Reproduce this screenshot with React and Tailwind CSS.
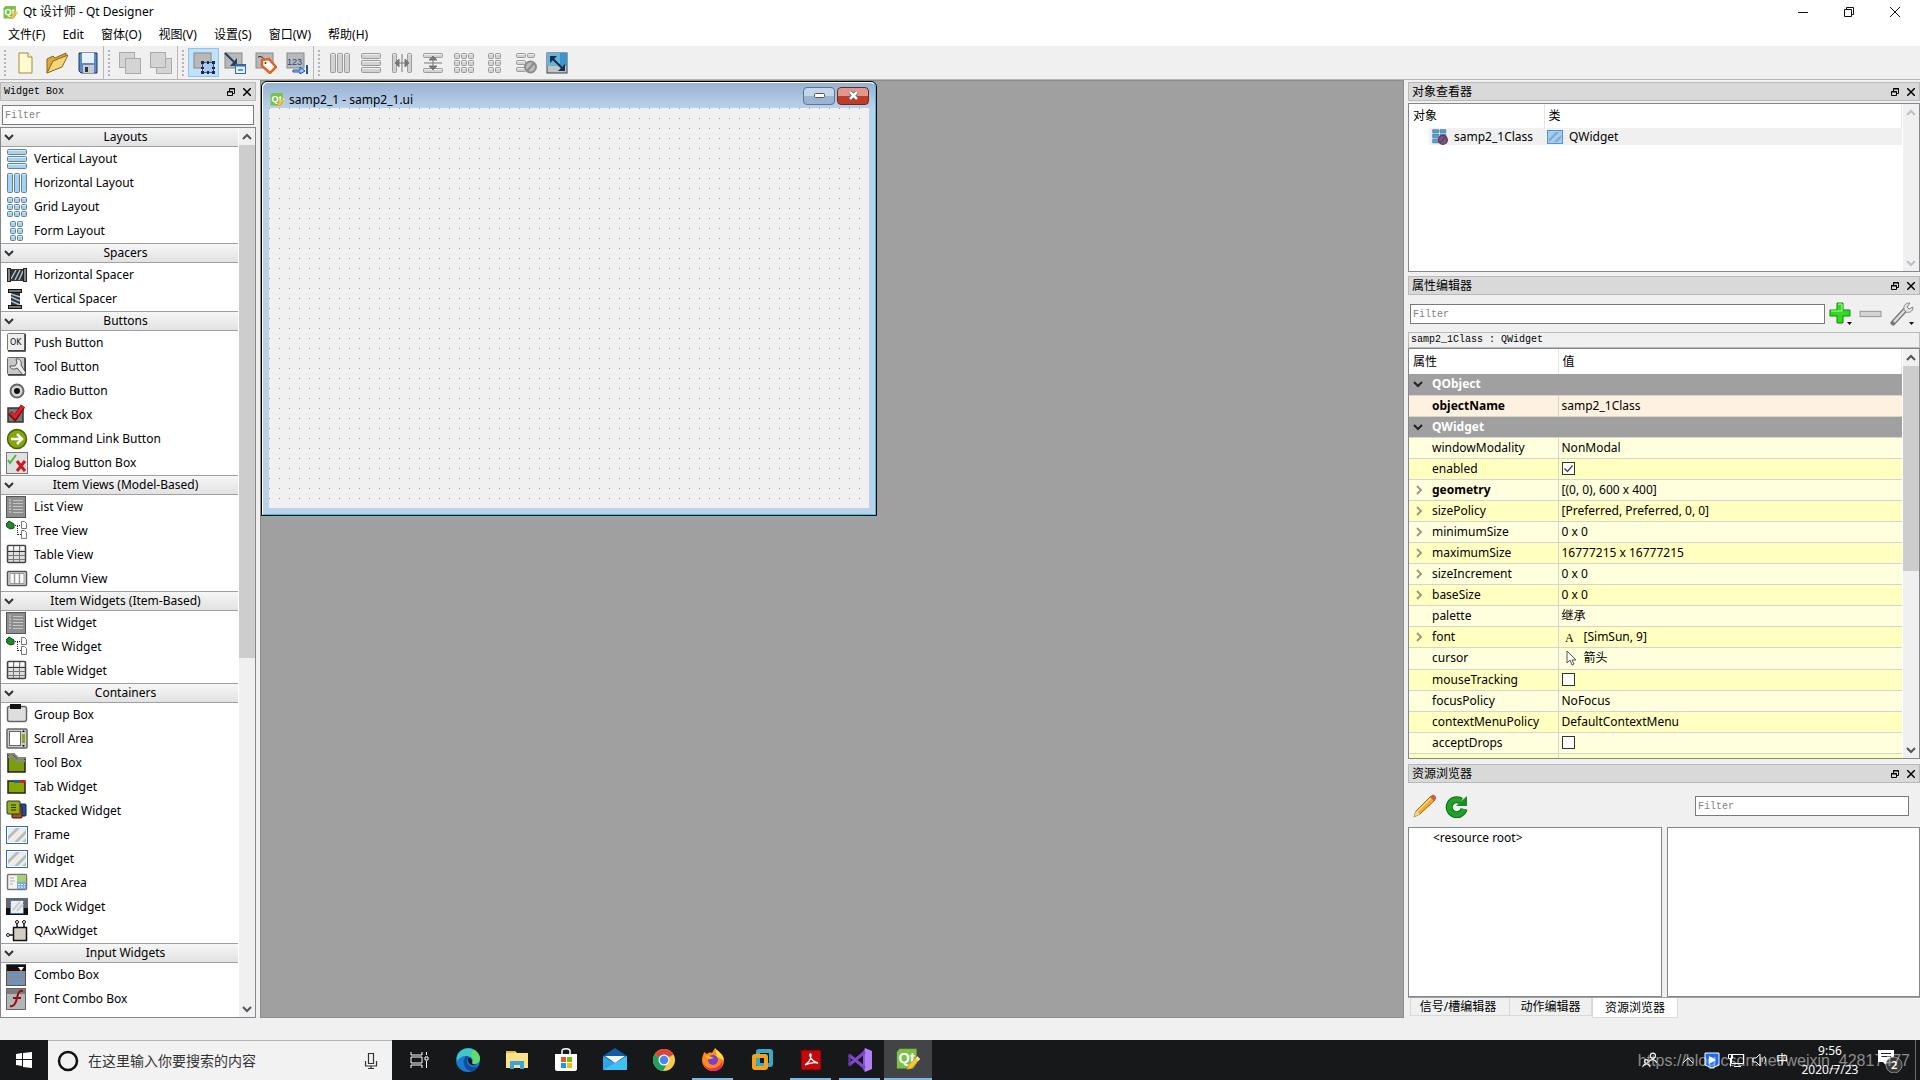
import clsx from "clsx";

const UI = "font-['Noto_Sans','Noto_Sans_CJK_SC',sans-serif]";
const SONG = "font-['Liberation_Mono','Noto_Sans_CJK_SC',monospace]";

/* ---------- shared svg bits ---------- */

function Svg({ w = 22, h = w, box = "0 0 22 22", className, children }) {
  return (
    <svg width={w} height={h} viewBox={box} className={clsx("block shrink-0", className)} fill="none" aria-hidden="true">
      {children}
    </svg>
  );
}

// rounded cells used by all the layout icons, as [x, y, w, h]
function Cells({ cells, gray }) {
  return cells.map(([x, y, w, h], i) => (
    <g key={i}>
      <rect x={x} y={y} width={w} height={h} rx="1"
        fill={gray ? "#d2d2d2" : "#a3d2f2"} stroke={gray ? "#9b9b9b" : "#68809c"} />
      <path d={`M${x + 1} ${y + 1}h${w - 2}`} stroke={gray ? "#efefef" : "#d8effc"} />
    </g>
  ));
}

const ROWS = [[1.5, 1.5, 19, 5], [1.5, 8.5, 19, 5], [1.5, 15.5, 19, 5]];
const COLS = [[1.5, 1.5, 5, 19], [8.5, 1.5, 5, 19], [15.5, 1.5, 5, 19]];
const GRID = [1.5, 8.5, 15.5].flatMap((y) => [1.5, 8.5, 15.5].map((x) => [x, y, 5, 5]));
const FORM = [1.5, 8.5, 15.5].flatMap((y) => [4.5, 11.5].map((x) => [x, y, 5, 5]));

function QtLogo({ size = 14 }) {
  return (
    <Svg w={size} box="0 0 28 28">
      <path d="M4 2h20v17l-4 6H1V6z" fill="#7bc143" />
      <text x="3" y="19" fontSize="17" fontWeight="700" fill="#fff" fontFamily="Liberation Sans">Qt</text>
      <path d="M25 11l3 3-10 11-5 1 2-5z" fill="#f6c535" stroke="#d88b2a" strokeWidth=".7" />
      <path d="M25 11l3 3-2 2-3-3z" fill="#f3dcd8" />
    </Svg>
  );
}

function Chevron({ dir = "down", color = "#444" }) {
  const d = { down: "M1 3l4 4 4-4", up: "M1 7l4-4 4 4", right: "M3 1l4 4-4 4" }[dir];
  return <Svg w={10} box="0 0 10 10"><path d={d} stroke={color} strokeWidth="2" /></Svg>;
}

/* ---------- widget box icons ---------- */

const listIcon = (
  <>
    <rect x=".5" y=".5" width="19" height="21" fill="#8e8e8e" stroke="#555" />
    <path d="M3 4h2M3 7h2M3 10h2M3 13h2M3 16h2" stroke="#ddd" />
    <path d="M7 4.500h10M7 7.500h10M7 10.500h10M7 13.500h10M7 16.500h10" stroke="#c4c4c4" />
  </>
);
const treeIcon = (
  <>
    <path d="M0 4l3-3 5 3v4l-4 1-3-2z" fill="#1f8a2c" stroke="#0d4d17" />
    <path d="M9 5.500h5M11.500 6v9M12 14.500h3" stroke="#222" strokeDasharray="1 1" />
    <path d="M15.500 1.500h3l2 2v5h-5zM15.500 10.500h3l2 2v6h-5z" fill="#fff" stroke="#777" />
  </>
);
const tableIcon = (
  <>
    <rect x="1.500" y="1.500" width="18" height="17" rx="1" fill="#dedede" stroke="#444" strokeWidth="1.500" />
    <path d="M3 4h4M9 4h4M15 4h3" stroke="#fff" strokeWidth="3" />
    <path d="M2 11.500h17M2 15.500h17M7.500 2v16M13.500 2v16" stroke="#777" />
    <path d="M2 7.500h17" stroke="#333" />
  </>
);
const stripes = (
  <>
    <rect x=".5" y="2.500" width="21" height="17" fill="#fff" stroke="#2c6cb8" />
    <rect x="2" y="4" width="18" height="14" fill="#ececea" />
    <path d="M2 12l8-8h4L2 16zM8 18L20 6v4l-8 8zM16 18l4-4v4z" fill="#bcbcbb" />
  </>
);

const ICONS = {
  vlayout: <Cells cells={ROWS} />,
  hlayout: <Cells cells={COLS} />,
  grid: <Cells cells={GRID} />,
  form: <Cells cells={FORM} />,
  hspacer: (
    <>
      <rect x="4" y="5" width="14" height="12" fill="#333" />
      <path d="M5 15l5-9M9 16l5-10M13 16l4-9" stroke="#a9c4d6" strokeWidth="1.500" />
      <rect x="1.500" y="4.500" width="3" height="13" fill="#888" stroke="#222" />
      <rect x="17.500" y="4.500" width="3" height="13" fill="#888" stroke="#222" />
    </>
  ),
  vspacer: (
    <>
      <path d="M5 4h9v14H5z" fill="#333" />
      <path d="M5 6l9 3M5 9l9 4M5 13l9 4" stroke="#a9c4d6" strokeWidth="1.500" />
      <rect x="2.500" y="1.500" width="13" height="3" fill="#777" stroke="#111" />
      <rect x="2.500" y="17.500" width="13" height="3" fill="#777" stroke="#111" />
    </>
  ),
  push: (
    <>
      <rect x="1.500" y="1.500" width="18" height="17" rx="1" fill="#eee" stroke="#777" />
      <path d="M19 2v17H2" stroke="#333" strokeWidth="1.500" />
      <text x="4" y="12.500" fontSize="8" fill="#111" fontFamily="DejaVu Sans">OK</text>
    </>
  ),
  tool: (
    <>
      <rect x="1.500" y="1.500" width="18" height="17" rx="1" fill="#c8c8c8" stroke="#666" />
      <path d="M19 2v17H2" stroke="#333" strokeWidth="1.500" />
      <path d="M10 3c4-1 6 3 5 6l5 8-3 2-6-7c-3 2-7 1-7-2l5 0 2-3z" fill="#ececec" stroke="#555" />
    </>
  ),
  radio: (
    <>
      <circle cx="11" cy="11" r="6.500" fill="#d8d8d8" stroke="#666" strokeWidth="2" />
      <circle cx="11" cy="11" r="3" fill="#111" />
    </>
  ),
  check: (
    <>
      <rect x="2" y="4" width="15" height="14" fill="#777" stroke="#333" strokeWidth="1.500" />
      <path d="M4 9l5 5 8-12" stroke="#7a0b10" strokeWidth="5" /><path d="M5 9l4 4 8-11" stroke="#e02128" strokeWidth="3" />
    </>
  ),
  command: (
    <>
      <circle cx="11" cy="11" r="9.500" fill="#82a60c" stroke="#4b6007" strokeWidth="1.500" />
      <path d="M5 11h10M11 6l5 5-5 5" stroke="#fff" strokeWidth="2.500" />
    </>
  ),
  dialog: (
    <>
      <rect x=".5" y=".5" width="21" height="21" fill="#e0e0e0" stroke="#777" />
      <path d="M2 8l2 3 6-8" stroke="#4cb848" strokeWidth="2" /><path d="M11 9l8 10M19 9l-8 10" stroke="#c91c22" strokeWidth="3" />
    </>
  ),
  list: listIcon,
  tree: treeIcon,
  table: tableIcon,
  column: (
    <>
      <rect x="1.500" y="3.500" width="19" height="14" rx="1" fill="#ddd" stroke="#555" strokeWidth="1.500" />
      <path d="M4 5.500h14v10H4z" fill="#fff" stroke="#999" />
      <path d="M8.500 6v9M13.500 6v9" stroke="#999" strokeWidth="1.500" />
    </>
  ),
  group: (
    <>
      <rect x="1.500" y="2.500" width="19" height="15" rx="2" fill="#dedede" stroke="#666" strokeWidth="1.500" />
      <rect x="4" y="0" width="11" height="5" fill="#111" />
    </>
  ),
  scroll: (
    <>
      <rect x="1" y="1" width="20" height="19" rx="1" fill="#ccc" stroke="#666" strokeWidth="1.500" />
      <rect x="3.500" y="3.500" width="11" height="14" fill="#fff" stroke="#666" />
      <path d="M17.500 6v9" stroke="#8ba81a" strokeWidth="3" /><path d="M16 4l1.500-2L19 4zM16 17l1.500 2 1.500-2z" fill="#111" />
    </>
  ),
  toolbox: (
    <>
      <path d="M2 2h5l4 4h8v14H2z" fill="#7d9c10" stroke="#222" strokeWidth="1.500" />
      <path d="M2 2h6l4 4h7M2 5h5l4 4h8" stroke="#888" strokeWidth="2" />
    </>
  ),
  tab: (
    <>
      <path d="M2 5h17v12H2z" fill="#87a800" stroke="#222" strokeWidth="1.500" />
      <rect x="8" y="4" width="5" height="3" fill="#1c63b8" /><rect x="14" y="4" width="5" height="3" fill="#d42020" />
    </>
  ),
  stacked: (
    <>
      <rect x="10" y="4" width="10" height="12" rx="1" fill="#1c53b0" stroke="#122" />
      <rect x="6" y="6" width="10" height="12" rx="1" fill="#b0501c" stroke="#311" />
      <rect x="1" y="1" width="13" height="13" rx="1" fill="#93b01a" stroke="#333" />
      <path d="M5 5h5M5 7.500h5M5 10h5" stroke="#263300" />
    </>
  ),
  frame: stripes,
  widget: stripes,
  mdi: (
    <>
      <rect x="1.500" y="2.500" width="19" height="15" rx="1" fill="#f4f4f4" stroke="#777" strokeWidth="1.500" />
      <rect x="11" y="3" width="9" height="7" fill="#a6cf72" /><rect x="11" y="10" width="9" height="7" fill="#7ba8ea" />
      <path d="M4 6h4M4 9h5M4 12h3" stroke="#aaa" /><path d="M12 12.500h7M12 15h7" stroke="#fff" strokeDasharray="2 1" />
    </>
  ),
  dock: (
    <>
      <rect y="2" width="22" height="17" fill="#666" /><rect y="12" width="22" height="7" fill="#111" />
      <rect x="4.500" y="4.500" width="13" height="13" fill="#eee" stroke="#2c6cb8" strokeDasharray="2 1" />
      <path d="M7 14l7-8M11 15l6-7" stroke="#ccc" strokeWidth="2" />
    </>
  ),
  qax: (
    <>
      <path d="M7.500 7.500h13v13h-13z" fill="#d3cdc4" stroke="#111" strokeWidth="1.500" />
      <path d="M11 7V3M18 7V3M7 15H3" stroke="#111" strokeWidth="1.500" />
      <circle cx="11" cy="2" r="1.500" fill="#fff" stroke="#111" /><circle cx="18" cy="2" r="1.500" fill="#fff" stroke="#111" />
      <circle cx="2" cy="15" r="1.500" fill="#fff" stroke="#111" />
    </>
  ),
  combo: (
    <>
      <rect x=".5" y=".5" width="19" height="21" fill="#8a8a8a" stroke="#555" />
      <rect x="1" y="1" width="19" height="6" fill="#111" /><path d="M12 3h6l-3 4z" fill="#fff" />
      <path d="M3 11h15M3 15h15M3 19h15" stroke="#5d97d8" strokeWidth="2" />
    </>
  ),
  fontcombo: (
    <>
      <rect x=".5" y=".5" width="19" height="21" fill="#b4b4b4" stroke="#666" />
      <rect x="1" y="1" width="18" height="5" fill="#7c7c7c" />
      <path d="M17 3c-4-1-5 2-6 7s-3 9-7 8M7 10h8" stroke="#8e1015" strokeWidth="2" />
    </>
  ),
};

const WIDGETS = [
  ["Layouts", [["Vertical Layout", "vlayout"], ["Horizontal Layout", "hlayout"], ["Grid Layout", "grid"], ["Form Layout", "form"]]],
  ["Spacers", [["Horizontal Spacer", "hspacer"], ["Vertical Spacer", "vspacer"]]],
  ["Buttons", [["Push Button", "push"], ["Tool Button", "tool"], ["Radio Button", "radio"], ["Check Box", "check"],
    ["Command Link Button", "command"], ["Dialog Button Box", "dialog"]]],
  ["Item Views (Model-Based)", [["List View", "list"], ["Tree View", "tree"], ["Table View", "table"], ["Column View", "column"]]],
  ["Item Widgets (Item-Based)", [["List Widget", "list"], ["Tree Widget", "tree"], ["Table Widget", "table"]]],
  ["Containers", [["Group Box", "group"], ["Scroll Area", "scroll"], ["Tool Box", "toolbox"], ["Tab Widget", "tab"],
    ["Stacked Widget", "stacked"], ["Frame", "frame"], ["Widget", "widget"], ["MDI Area", "mdi"], ["Dock Widget", "dock"], ["QAxWidget", "qax"]]],
  ["Input Widgets", [["Combo Box", "combo"], ["Font Combo Box", "fontcombo"]]],
];

/* ---------- top of the window ---------- */

function TitleBar() {
  return (
    <header className="flex h-6 shrink-0 items-center bg-white pr-0.5 pl-[3px] text-xs">
      <QtLogo size={15} />
      <h1 className="ml-[5px] flex-1">Qt 设计师 - Qt Designer</h1>
      <button aria-label="Minimize" className="flex h-full w-[46px] items-center justify-center">
        <Svg w={10} box="0 0 10 10"><path d="M0 5.500h10" stroke="#111" /></Svg>
      </button>
      <button aria-label="Restore" className="flex h-full w-[46px] items-center justify-center">
        <Svg w={10} box="0 0 10 10"><path d="M.5 2.500h7v7h-7zM2.500 2.500v-2h7v7h-2" stroke="#111" /></Svg>
      </button>
      <button aria-label="Close" className="flex h-full w-[46px] items-center justify-center">
        <Svg w={10} box="0 0 10 10"><path d="M0 0l10 10M10 0L0 10" stroke="#111" /></Svg>
      </button>
    </header>
  );
}

function MenuBar() {
  const menus = ["文件(F)", "Edit", "窗体(O)", "视图(V)", "设置(S)", "窗口(W)", "帮助(H)"];
  return (
    <nav className="flex h-[22px] shrink-0 items-center gap-px bg-white text-xs">
      {menus.map((m) => <button key={m} className="px-2">{m}</button>)}
    </nav>
  );
}

const sheet = (x, y) => <rect x={x + 0.5} y={y + 0.5} width="15" height="15" fill="#d4d4d4" stroke="#aaa" />;
const panel = <rect x="1" y="1" width="17" height="15" fill="#b9b9b9" stroke="#888" />;

const TOOLS = [
  [
    ["New", <><path d="M4 1h9l4 4v16H4z" fill="#fffbd0" stroke="#a38b36" /><path d="M13 1v4h4" fill="#fff" stroke="#a38b36" /></>],
    ["Open", <><path d="M1 21V7l6-3 2 2 11-5v4" fill="#d9a93d" stroke="#8c6417" /><path d="M1 21L7 9l15-6-6 12z" fill="#f4d57c" stroke="#8c6417" /></>],
    ["Save", <><path d="M2 1h18v20H4l-2-2z" fill="#5b8ac4" stroke="#1e3a66" /><path d="M5 1h12v10H5z" fill="#e8f0f8" /><path d="M6 13h11v8H6z" fill="#c8ccd2" /><path d="M8 15h3v5H8z" fill="#333" /></>],
  ],
  [
    ["Raise", <>{sheet(0, 0)}{sheet(6, 6)}</>],
    ["Lower", <>{sheet(6, 6)}{sheet(0, 0)}</>],
  ],
  [
    ["Edit Widgets", <>{panel}<rect x="9.500" y="10.500" width="11" height="10" fill="#aac8ee" stroke="#2f5c9c" /><path d="M8 9h3v3H8zM14 9h2v3h-2zM19 9h3v3h-3zM8 15h3v2H8zM19 15h3v2h-3zM8 19h3v3H8zM14 19h2v3h-2zM19 19h3v3h-3z" fill="#1c2c48" /></>],
    ["Edit Signals/Slots", <>{panel}<path d="M1 1l10 10" stroke="#24425e" strokeWidth="2" /><path d="M13 6v8H6z" fill="#24425e" /><rect x="11.500" y="12.500" width="10" height="9" fill="#e8f0fa" stroke="#2f6bb0" /><path d="M11 13.500h11" stroke="#2f6bb0" strokeWidth="2" /><path d="M14 18h5" stroke="#6a93c8" strokeWidth="2" /></>],
    ["Edit Buddies", <>{panel}<path d="M3 5c3-1 5 0 7 3" stroke="#222" /><path d="M7 8l7-1 7 8-6 6-8-7z" fill="#fff" stroke="#e0641f" strokeWidth="2.500" /><circle cx="10.500" cy="11" r="1" fill="#333" /></>],
    ["Edit Tab Order", <>{panel}<text x="1" y="13" fontSize="9" fill="#1c4a86" fontFamily="Liberation Sans">123</text><path d="M7 18h7v-3l5 4-5 3v-2H7z" fill="#9cc4f0" stroke="#1c56a8" /><path d="M21 13v9" stroke="#1c56a8" strokeWidth="2" /></>],
  ],
  [
    ["Lay Out Horizontally", <Cells gray cells={COLS} />],
    ["Lay Out Vertically", <Cells gray cells={ROWS} />],
    ["Horizontal Splitter", <><Cells gray cells={[[1.5, 1.5, 4, 19], [16.5, 1.5, 4, 19]]} /><path d="M7 11h8M8 7l-4 4 4 4zM14 7l4 4-4 4zM11 2v18" stroke="#777" fill="#777" /></>],
    ["Vertical Splitter", <><Cells gray cells={[[1.5, 1.5, 19, 4], [1.5, 16.5, 19, 4]]} /><path d="M11 7v8M7 8l4-4 4 4zM7 14l4 4 4-4zM2 11h18" stroke="#777" fill="#777" /></>],
    ["Lay Out in a Grid", <Cells gray cells={GRID} />],
    ["Lay Out in a Form", <Cells gray cells={FORM} />],
    ["Break Layout", <><Cells gray cells={[[1.5, 1.5, 9, 4], [12.5, 1.5, 7, 4], [1.5, 8.5, 9, 4], [1.5, 15.5, 9, 4]]} /><circle cx="15.500" cy="15" r="5.500" fill="#bbb" stroke="#8c8c8c" strokeWidth="2" /><path d="M12 19l7-8" stroke="#8c8c8c" strokeWidth="2" /></>],
    ["Adjust Size", <><rect x="1" y="1" width="20" height="20" fill="#c4c4c4" stroke="#345" /><path d="M1 1h20v13h-7V8H1z" fill="#3c94ca" /><path d="M1 1h13v13H1z" fill="#6ab2dc" /><path d="M6 6l11 11" stroke="#12304c" strokeWidth="2" /><path d="M4 4h7l-7 7zM19 19v-7l-7 7z" fill="#12304c" /></>],
  ],
];

function ToolBar() {
  return (
    <div role="toolbar" className="flex h-[34px] shrink-0 items-center border-b border-[#b4b4b4]">
      {TOOLS.map((group, g) => (
        <div key={g} className={clsx("flex h-full items-center", g > 0 && "pr-px", g < 3 && "border-r border-[#b8b8b8]")}>
          <div className="mx-1 h-[26px] w-0.5 bg-[repeating-linear-gradient(#b4b4b4_0_2px,transparent_2px_4px)]" />
          {group.map(([name, icon], i) => (
            <button key={name} aria-label={name} title={name}
              className={clsx("flex h-[29px] w-[31px] items-center justify-center border",
                g === 2 && i === 0 ? "border-[#8cc6ee] bg-[#c2e0f6]" : "border-transparent")}>
              <Svg>{icon}</Svg>
            </button>
          ))}
        </div>
      ))}
    </div>
  );
}

/* ---------- dock parts ---------- */

function DockTitle({ children }) {
  return (
    <div className="flex h-[19px] shrink-0 items-center border border-[#b9b9b9] bg-[#d9d9d9] pr-1 pl-[3px]">
      <h2 className="flex-1">{children}</h2>
      <button aria-label="Float" className="mr-2">
        <Svg w={8} box="0 0 8 8"><path d="M.5 3.500h5v4h-5zM2.500 3V.5h5v5H6M2 1h6M0 4h6" stroke="#000" /></Svg>
      </button>
      <button aria-label="Close">
        <Svg w={8} box="0 0 8 8"><path d="M0 0l8 8M8 0L0 8" stroke="#000" strokeWidth="1.500" /></Svg>
      </button>
    </div>
  );
}

function Filter({ label, className }) {
  return (
    <input type="text" aria-label={label} placeholder="Filter"
      className={clsx("h-5 min-w-0 border border-[#7a7a7a] bg-white px-0.5 text-[10px] placeholder:text-[#808080]", SONG, className)} />
  );
}

function ScrollBar({ thumb, disabled }) {
  const color = disabled ? "#bfbfbf" : "#555";
  return (
    <div className="flex w-4 shrink-0 flex-col items-center bg-[#f0f0f0]">
      <button aria-label="Scroll up" className="flex h-[17px] items-center"><Chevron dir="up" color={color} /></button>
      <div className="w-full flex-1">{thumb && <div className={clsx("w-full bg-[#cdcdcd]", thumb)} />}</div>
      <button aria-label="Scroll down" className="flex h-[17px] items-center"><Chevron color={color} /></button>
    </div>
  );
}

function WidgetBox() {
  return (
    <aside className="flex w-64 shrink-0 flex-col pt-0.5">
      <div className={clsx("text-[10px]", SONG)}><DockTitle>Widget Box</DockTitle></div>
      <Filter label="Filter widgets" className="mx-0.5 mt-1" />
      <div className="mt-0.5 flex min-h-0 flex-1 border border-[#828790] bg-white">
        <div className="min-w-0 flex-1 overflow-hidden text-xs">
          {WIDGETS.map(([title, items], i) => (
            <section key={title}>
              <h3 className={clsx("border-b border-[#a0a0a0] bg-linear-to-b from-[#f6f6f6] to-[#e2e2e2]",
                i === 0 ? "h-[19px]" : "h-5 border-t")}>
                <button className="flex h-full w-full items-center pr-px pl-[3px]">
                  <Chevron color="#333" /><span className="flex-1">{title}</span>
                </button>
              </h3>
              <ul>
                {items.map(([name, icon]) => (
                  <li key={name} className="flex h-6 items-center gap-1.5 pl-[5px]"><Svg>{ICONS[icon]}</Svg>{name}</li>
                ))}
              </ul>
            </section>
          ))}
        </div>
        <div className="flex pl-px"><ScrollBar thumb="h-3/5" /></div>
      </div>
    </aside>
  );
}

/* ---------- form being edited ---------- */

function FormWindow() {
  return (
    <div className="w-[616px] rounded-t-md border border-black bg-[#bad1ea]">
      <div className="rounded-t-md border border-t-white border-r-[#28c8e8] border-b-[#28c8e8] border-l-white bg-linear-to-b from-[#98b2d2] to-[#bad1ea] to-[25px] px-1.5 pb-1.5">
        <div className="flex h-[25px] items-center text-xs">
          <div className="mt-2 flex flex-1 items-center gap-1 pl-px"><QtLogo size={15} />samp2_1 - samp2_1.ui</div>
          <button aria-label="Minimize form"
            className="mr-0.5 flex h-[18px] w-8 items-center justify-center rounded-sm border border-[#5c7390] bg-linear-to-b from-[#c4d6ea] from-50% to-[#9ab4d2] to-50%">
            <Svg w={11} h={5} box="0 0 11 5"><rect x=".5" y=".5" width="10" height="4" rx="1" fill="#fff" stroke="#555" /></Svg>
          </button>
          <button aria-label="Close form"
            className="flex h-[18px] w-8 items-center justify-center rounded-sm border border-[#6b2a26] bg-linear-to-b from-[#e0988a] from-50% to-[#bf3d26] to-50%">
            <Svg w={11} h={9} box="0 0 11 9">
              <path d="M2 1l7 7M9 1L2 8" stroke="#555" strokeWidth="4" /><path d="M2 1l7 7M9 1L2 8" stroke="#fff" strokeWidth="2.500" />
            </Svg>
          </button>
        </div>
        <div className="h-[400px] bg-[#f0f0f0] bg-[linear-gradient(90deg,transparent_1px,#f0f0f0_1px),linear-gradient(#9a9a9a_1px,transparent_1px)] bg-size-[10px_10px]" />
      </div>
    </div>
  );
}

/* ---------- right hand docks ---------- */

function ObjectInspector() {
  return (
    <section className="flex flex-col">
      <DockTitle>对象查看器</DockTitle>
      <div className="mt-0.5 flex h-[169px] border border-[#828790] bg-white">
        <div className="flex-1">
          <table className="w-full table-fixed text-left">
            <thead>
              <tr className="h-6">
                <th className="w-[135px] border-r border-[#e5e5e5] pl-1 font-normal">对象</th>
                <th className="border-r border-[#e5e5e5] pl-1 font-normal">类</th>
              </tr>
            </thead>
            <tbody>
              <tr className="h-[17px]">
                <td className="pl-5">
                  <span className="flex h-[17px] items-center gap-1.5 bg-[#f0f0f0] pl-[3px]">
                    <Svg w={16}>
                      <path d="M1 1h8v4H1zM11 1h8v4h-8zM1 7h8v5H1zM1 14h8v5H1zM11 7h8v4h-8z" fill="#5a9fd4" stroke="#3c78a8" />
                      <circle cx="15" cy="15" r="6" fill="#7a5a7c" stroke="#7a3048" strokeWidth="2" /><path d="M11 19l8-8" stroke="#3c4c80" strokeWidth="2" />
                    </Svg>
                    samp2_1Class
                  </span>
                </td>
                <td className="bg-[#f0f0f0] pl-[3px]">
                  <span className="flex items-center gap-1.5">
                    <Svg w={16} h={14} box="0 0 16 14">
                      <rect x=".5" y=".5" width="15" height="13" fill="#a4cdee" stroke="#4c94dc" />
                      <path d="M2 9l7-7h3L2 12zM7 12l7-7v3l-4 4z" fill="#84a8c8" />
                    </Svg>
                    QWidget
                  </span>
                </td>
              </tr>
            </tbody>
          </table>
        </div>
        <div className="flex pl-px"><ScrollBar disabled /></div>
      </div>
    </section>
  );
}

function CheckBox({ label, checked }) {
  return (
    <span className="relative block size-[13px]">
      <input type="checkbox" aria-label={label} defaultChecked={checked}
        className="peer block size-[13px] appearance-none border border-[#333] bg-white" />
      <Svg w={13} box="0 0 13 13" className="pointer-events-none absolute inset-0 opacity-0 peer-checked:opacity-100">
        <path d="M2.500 6.500l3 3 5-6" stroke="#444" strokeWidth="1.300" />
      </Svg>
    </span>
  );
}

// expand: row has children, shown with a side arrow
const PROPS = [
  { name: "windowModality", value: "NonModal" },
  { name: "enabled", check: true },
  { name: "geometry", value: "[(0, 0), 600 x 400]", expand: true, bold: true },
  { name: "sizePolicy", value: "[Preferred, Preferred, 0, 0]", expand: true },
  { name: "minimumSize", value: "0 x 0", expand: true },
  { name: "maximumSize", value: "16777215 x 16777215", expand: true },
  { name: "sizeIncrement", value: "0 x 0", expand: true },
  { name: "baseSize", value: "0 x 0", expand: true },
  { name: "palette", value: "继承" },
  { name: "font", value: "[SimSun, 9]", expand: true, icon: <text x="3" y="13" fontSize="12" fill="#000" fontFamily="Liberation Serif">A</text> },
  { name: "cursor", value: "箭头", tall: true, icon: <path d="M5 1v12l3-3 2 5 2-1-2-4h4z" fill="#fff" stroke="#555" /> },
  { name: "mouseTracking", check: false },
  { name: "focusPolicy", value: "NoFocus" },
  { name: "contextMenuPolicy", value: "DefaultContextMenu" },
  { name: "acceptDrops", check: false },
];

function PropertyRow({ name, value, check, expand, bold, icon, tall, bg }) {
  return (
    <tr className={clsx("border-b border-[#d4d4d4]", tall ? "h-[22px]" : "h-[21px]", bg)}>
      <td className="border-r border-[#d4d4d4]">
        <div className="flex items-center">
          <span className="flex w-[23px] justify-center pr-1">{expand && <Chevron dir="right" color="#9c9c84" />}</span>
          <span className={clsx(bold && "font-bold")}>{name}</span>
        </div>
      </td>
      <td className="pl-[3px]">
        <div className="flex items-center gap-1.5">
          {icon && <Svg w={16} box="0 0 16 16">{icon}</Svg>}
          {check !== undefined ? <CheckBox label={name} checked={check} /> : value}
        </div>
      </td>
    </tr>
  );
}

function PropertyGroup({ name }) {
  return (
    <tr className="h-[21px] border-b border-[#d4d4d4] bg-[#a0a0a0] font-bold text-white">
      <th colSpan={2} scope="colgroup">
        <div className="flex items-center gap-2 pl-1"><Chevron color="#222" /><span className="pl-px">{name}</span></div>
      </th>
    </tr>
  );
}

function PropertyEditor() {
  return (
    <section className="mt-1 flex flex-col">
      <DockTitle>属性编辑器</DockTitle>
      <div className="flex h-[37px] items-center pt-px pr-1.5 pl-0.5">
        <Filter label="Filter properties" className="flex-1" />
        <button aria-label="Add property" className="mr-1.5 ml-1 flex items-end">
          <Svg w={24} h={24} box="0 0 24 24">
            <path d="M8 1h6v7h7v6h-7v7H8v-7H1V8h7z" fill="#30dc20" stroke="#0a8a08" /><path d="M9 2h4v7H2" stroke="#b4f8a8" />
            <path d="M18 20h5l-2.500 3z" fill="#111" />
          </Svg>
        </button>
        <button aria-label="Remove property" className="mr-2"><Svg w={23}><rect x="1" y="8" width="20" height="5" fill="#d4d4d4" stroke="#999" /></Svg></button>
        <button aria-label="Configure">
          <Svg w={24} h={24} box="0 0 24 24">
            <path d="M3 21L15 8" stroke="#777" strokeWidth="5" strokeLinecap="round" /><path d="M4 20L15 8" stroke="#ddd" strokeWidth="2.500" />
            <path d="M14 8c-1-5 2-7 6-7l-3 4 2 2 4-2c0 5-4 6-7 5z" fill="#e4e4e4" stroke="#888" />
            <path d="M19 20h5l-2.500 3z" fill="#111" />
          </Svg>
        </button>
      </div>
      <p className={clsx("flex h-4 items-center border border-[#b9b9b9] pl-0.5 text-[10px]", SONG)}>samp2_1Class : QWidget</p>
      <div className="flex h-[411px] border border-[#828790] bg-white">
        <div className="flex-1 overflow-hidden">
          <table className="w-full table-fixed border-collapse text-left">
            <thead>
              <tr className="h-[25px]">
                <th className="w-[149px] border-r border-[#e5e5e5] pl-1 font-normal">属性</th>
                <th className="border-r border-[#e5e5e5] pl-1 font-normal">值</th>
              </tr>
            </thead>
            <tbody>
              <PropertyGroup name="QObject" />
              <PropertyRow name="objectName" value="samp2_1Class" bold bg="bg-[#fff1df]" />
              <PropertyGroup name="QWidget" />
              {PROPS.map((p, i) => <PropertyRow key={p.name} {...p} bg={i % 2 ? "bg-[#ffffbf]" : "bg-[#ffffdd]"} />)}
              <PropertyRow name="" value="" bg="bg-[#ffffbf]" />
            </tbody>
          </table>
        </div>
        <div className="flex pl-px"><ScrollBar thumb="h-[205px]" /></div>
      </div>
    </section>
  );
}

function ResourceBrowser() {
  return (
    <section className="mt-[5px] flex min-h-0 flex-1 flex-col">
      <DockTitle>资源浏览器</DockTitle>
      <div className="flex h-[44px] shrink-0 items-center pt-0.5 pr-[11px] pl-1">
        <button aria-label="Edit resources">
          <Svg w={26} h={26} box="0 0 26 26">
            <path d="M2 24l2-6L19 3l4 4L8 21z" fill="#f2a92c" stroke="#a46a14" /><path d="M5 19L20 4" stroke="#ffd880" strokeWidth="1.500" />
            <path d="M18 4l2-2c2-1 5 2 4 4l-2 2z" fill="#c86044" /><path d="M2 24l2-6 4 3z" fill="#ecd4a8" />
          </Svg>
        </button>
        <button aria-label="Reload" className="ml-1.5">
          <Svg w={24} h={24} box="0 0 24 24">
            <path d="M17 7A7.500 7.500 0 1 0 20 15" stroke="#0d6c14" strokeWidth="7" />
            <path d="M17 7A7.500 7.500 0 1 0 20 15" stroke="#22a02a" strokeWidth="5" />
            <path d="M23 2v10H12z" fill="#1c8c26" />
          </Svg>
        </button>
        <Filter label="Filter resources" className="ml-auto w-[214px]" />
      </div>
      <div className="flex min-h-0 flex-1 gap-[5px] border-b border-[#a0a0a0]">
        <ul className="flex-1 border border-[#828790] bg-white">
          <li className="pt-0.5 pl-6">&lt;resource root&gt;</li>
        </ul>
        <div className="flex-1 border border-[#828790] bg-white" />
      </div>
      <div role="tablist" className="flex h-5 shrink-0 items-start pl-0.5">
        <button role="tab" className="flex h-[18px] w-[100px] items-center justify-center border border-t-0 border-[#d9d9d9] pr-1">信号/槽编辑器</button>
        <button role="tab" className="flex h-[18px] w-[82px] items-center justify-center border-r border-b border-[#d9d9d9]">动作编辑器</button>
        <button role="tab" aria-selected="true" className="flex h-5 w-[86px] items-center justify-center border border-t-0 border-[#d9d9d9] bg-white">资源浏览器</button>
      </div>
    </section>
  );
}

/* ---------- windows task bar ---------- */

const APPS = [
  ["Task View", "", <path d="M4 4v3h11V4M4 20v-3h11v3M4 9h11v6H4zM19.500 4v3M19.500 13v7M18 9h3v3h-3z" stroke="#fff" />],
  ["Edge", "", <>
    <circle cx="12" cy="12" r="12" fill="#1b78d0" /><path d="M1 9C4-2 20-3 24 9c1 5-3 8-8 7 2-5-1-8-6-8-4 0-7 2-9 5z" fill="#3cc8c4" />
    <path d="M17 2c6 2 8 8 6 11-2 3-5 3-7 3 2-4 1-6-1-8z" fill="#66dc60" /><path d="M10 8c-4 4-3 12 4 15 4 0 7-2 9-5-6 3-12 0-12-5 0-2 1-3 2-4z" fill="#0f4c9c" />
    <path d="M12 10c2-1 5 1 4 5 1 2 4 2 6 1-4 3-11 1-10-6z" fill="#14181c" />
  </>],
  ["File Explorer", "", <><path d="M1 3h9l2 2h11v15H1z" fill="#fde28a" /><path d="M1 3h9v2H1z" fill="#f0b92c" /><path d="M5 21v-8h14v8h-4v-4H9v4z" fill="#38a4e4" /></>],
  ["Store", "", <><path d="M8 7V3c0-3 8-3 8 0v4" stroke="#fff" strokeWidth="1.500" /><path d="M1 6h22v15c0 1-1 2-2 2H3c-1 0-2-1-2-2z" fill="#fff" /><path d="M7 9h5v5H7z" fill="#f25022" /><path d="M13 9h5v5h-5z" fill="#7fba00" /><path d="M7 15h5v5H7z" fill="#00a4ef" /><path d="M13 15h5v5h-5z" fill="#ffb900" /></>],
  ["Mail", "", <><path d="M0 8l12-8 12 8v3H0z" fill="#0f5ca8" /><path d="M0 8v14h24V8l-12 7z" fill="#2fa4e8" /><path d="M24 8v14H0z" fill="#40c0f4" /><path d="M2 8h20l-10 7z" fill="#f4f4f4" /></>],
  ["Chrome", "", <><circle cx="12" cy="12" r="11" fill="#fbcb43" /><path d="M12 12L2.500 6.500a11 11 0 0 1 19 0z" fill="#dc4437" /><path d="M12 12L2.500 6.500A11 11 0 0 0 11 23l5-9z" fill="#1fa05c" /><circle cx="12" cy="12" r="5.500" fill="#fff" /><circle cx="12" cy="12" r="4.300" fill="#4687f4" /></>],
  ["Firefox", "under", <><path d="M14 0c3 4 8 5 9 12 0 7-5 11-11 11S1 18 1 12c0-4 2-6 2-8l3 2c1-1 3-2 5-1 1-2 2-3 3-5z" fill="#ff8a1c" /><path d="M14 0c3 4 8 5 9 12l-7-3z" fill="#ffdc3c" /><path d="M2 14c2 6 8 8 14 5 4-2 5-5 5-7 2 8-4 11-9 11S3 19 2 14z" fill="#f02c64" /><circle cx="12" cy="12" r="5" fill="#7b3fd0" /><path d="M4 8c4-1 6 1 9 2-2 0-3 2-6 1z" fill="#ffb028" /></>],
  ["VMware", "", <><rect x="8" y="3" width="13" height="14" rx="1" stroke="#3ca8c8" strokeWidth="4" /><rect x="4" y="8" width="12" height="12" rx="1" stroke="#f4a41c" strokeWidth="4" /></>],
  ["Acrobat", "under", <><rect x="2" y="2" width="20" height="20" fill="#c4090d" stroke="#5c0404" /><path d="M6 17c3-2 6-6 6-10 0-2-2-1-1 1 1 3 4 6 8 7-4-1-8 0-13 2z" stroke="#fff" strokeWidth="1.300" /></>],
  ["Visual Studio", "under", <><path d="M17 0l7 3v18l-7 3z" fill="#b182f4" /><path d="M17 0v24l-2-3V4z" fill="#8c55d8" /><path d="M1 7l16 13M1 17L17 4" stroke="#8147c8" strokeWidth="3" /><path d="M1.500 6v12" stroke="#6c38b0" strokeWidth="2" /></>],
];

function TaskBar() {
  return (
    <footer className="flex h-10 shrink-0 items-stretch bg-[#171819] text-white">
      <button aria-label="Start" className="flex w-12 items-center justify-center">
        <Svg w={16} box="0 0 16 16"><path d="M0 2l6-1v6H0zM7 1l9-1v7H7zM0 8h6v6l-6-1zM7 8h9v8l-9-1z" fill="#fff" /></Svg>
      </button>
      <label className="mr-0.5 flex w-[344px] items-center border-t border-[#b4b4b4] bg-[#f2f2f2] pr-[13px] pl-[9px] text-[#333]">
        <Svg><circle cx="11" cy="11" r="9" stroke="#111" strokeWidth="2.500" /></Svg>
        <input type="text" placeholder="在这里输入你要搜索的内容" className="ml-[9px] min-w-0 flex-1 text-sm placeholder:text-[#333]" />
        <Svg w={16} h={18} box="0 0 16 18"><path d="M5.500 1.500h5v10h-5zM2.500 9v5h11V9M8 14v3M5 16.500h6" stroke="#333" strokeWidth="1.200" /></Svg>
      </label>
      {APPS.map(([name, state, icon]) => (
        <button key={name} aria-label={name} className="relative flex w-[49px] items-center justify-center">
          <Svg w={24} box="0 0 24 24">{icon}</Svg>
          {state && <span className="absolute inset-x-1 bottom-0 h-0.5 bg-[#76b9ed]" />}
        </button>
      ))}
      <button aria-label="Qt Designer" className="flex w-12 items-center justify-center border-b-2 border-[#76b9ed] bg-[#434445]"><QtLogo size={24} /></button>
      <div className="relative ml-auto flex items-center text-xs">
        <Svg w={16} className="mr-6">
          <circle cx="15" cy="5" r="3.500" stroke="#fff" strokeWidth="1.500" /><path d="M10 13c2-4 9-3 10 2" stroke="#fff" strokeWidth="1.500" />
          <circle cx="6" cy="13" r="2.500" stroke="#fff" strokeWidth="1.500" /><path d="M1 21c1-6 9-6 10 0" stroke="#fff" strokeWidth="1.500" />
        </Svg>
        <Svg w={12} h={8} box="0 0 12 8" className="mr-2.5"><path d="M1 7l5-5 5 5" stroke="#fff" /></Svg>
        <Svg w={16} box="0 0 16 16" className="mr-2"><path d="M1 1h14v12l-7 3-7-3z" fill="#1a6cf0" stroke="#fff" /><path d="M5 4l7 4-7 4z" fill="#fff" /></Svg>
        <Svg w={16} box="0 0 16 16" className="mr-2"><path d="M3.500 2.500h12v9h-12zM6 14.500h7M.5 2.500h4v4h-4zM2.500 6.500v8" stroke="#fff" fill="#171819" /></Svg>
        <Svg w={16} box="0 0 16 16" className="mr-2"><path d="M1 6h3l4-4v12l-4-4H1z" stroke="#fff" /><path d="M10 6c1 1 1 3 0 4M12 4c2 2 2 6 0 8" stroke="#ccc" /></Svg>
        <span className="mr-2.5">中</span>
        <time className="mr-4 w-16 text-center leading-[19px] whitespace-nowrap">9:56<br />2020/7/23</time>
        <Svg w={26} h={26} box="0 0 26 26" className="mr-[11px]">
          <path d="M0 3h16v12H8v3l-3-3H0z" fill="#fff" /><path d="M3 6.500h10M3 9.500h10" stroke="#222" />
          <circle cx="16" cy="18" r="8" fill="#3c3c3c" stroke="#888" /><text x="13" y="22" fontSize="11" fill="#fff" fontFamily="Noto Sans" fontWeight="600">2</text>
        </Svg>
        <div className="h-full w-[5px] border-l border-[#6c6c6c]" />
        <p className="absolute right-[10px] bottom-[7px] font-['Liberation_Sans',sans-serif] text-base whitespace-nowrap text-white/50">
          https://blog.csdn.net/weixin_42817477
        </p>
      </div>
    </footer>
  );
}

export default function App() {
  return (
    <div className={clsx("flex h-screen flex-col overflow-hidden bg-[#f0f0f0] text-xs leading-4 text-black", UI)}>
      <TitleBar />
      <MenuBar />
      <ToolBar />
      <div className="flex min-h-0 flex-1">
        <WidgetBox />
        <main className="ml-1 min-w-0 flex-1 border border-[#8c8c8c] bg-[#a0a0a0]"><FormWindow /></main>
        <aside className="ml-[3px] flex w-[513px] shrink-0 flex-col pt-0.5 pl-px">
          <ObjectInspector />
          <PropertyEditor />
          <ResourceBrowser />
        </aside>
      </div>
      <div className="h-[22px] shrink-0" />
      <TaskBar />
    </div>
  );
}
